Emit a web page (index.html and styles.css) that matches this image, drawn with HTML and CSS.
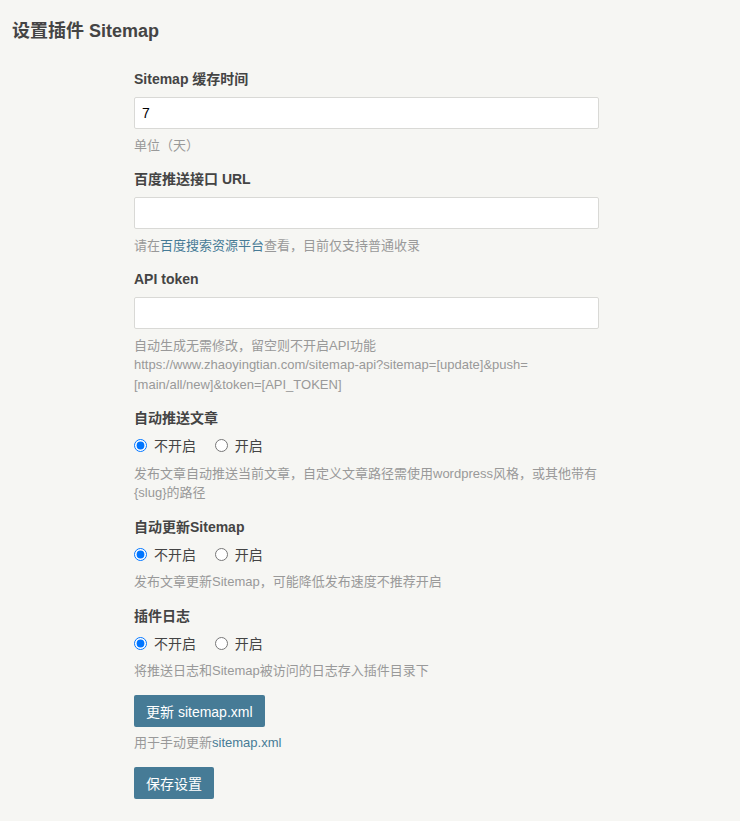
FILE: index.html
```html
<!DOCTYPE html>
<html lang="zh-CN">
<head>
<meta charset="utf-8">
<title>设置插件 Sitemap</title>
<link rel="stylesheet" href="styles.css">
</head>
<body>
<div class="main">
  <div class="page-title"><h2>设置插件 Sitemap</h2></div>
  <form class="config-form">
    <ul class="option">
      <li>
        <label class="option-label">Sitemap 缓存时间</label>
        <input class="text" type="text" value="7">
        <p class="description">单位（天）</p>
      </li>
    </ul>
    <ul class="option">
      <li>
        <label class="option-label">百度推送接口 URL</label>
        <input class="text" type="text" value="">
        <p class="description">请在<a href="#">百度搜索资源平台</a>查看，目前仅支持普通收录</p>
      </li>
    </ul>
    <ul class="option">
      <li>
        <label class="option-label">API token</label>
        <input class="text" type="text" value="">
        <p class="description">自动生成无需修改，留空则不开启API功能<br>https://www.zhaoyingtian.com/sitemap-api?sitemap=[update]&amp;push=[main/all/new]&amp;token=[API_TOKEN]</p>
      </li>
    </ul>
    <ul class="option">
      <li>
        <label class="option-label">自动推送文章</label>
        <span class="choice"><input type="radio" name="push" checked> <label>不开启</label></span>
        <span class="choice"><input type="radio" name="push"> <label>开启</label></span>
        <p class="description">发布文章自动推送当前文章，自定义文章路径需使用wordpress风格，或其他带有{slug}的路径</p>
      </li>
    </ul>
    <ul class="option">
      <li>
        <label class="option-label">自动更新Sitemap</label>
        <span class="choice"><input type="radio" name="upd" checked> <label>不开启</label></span>
        <span class="choice"><input type="radio" name="upd"> <label>开启</label></span>
        <p class="description">发布文章更新Sitemap，可能降低发布速度不推荐开启</p>
      </li>
    </ul>
    <ul class="option">
      <li>
        <label class="option-label">插件日志</label>
        <span class="choice"><input type="radio" name="log" checked> <label>不开启</label></span>
        <span class="choice"><input type="radio" name="log"> <label>开启</label></span>
        <p class="description">将推送日志和Sitemap被访问的日志存入插件目录下</p>
      </li>
    </ul>
    <ul class="option">
      <li>
        <button class="btn primary" type="button">更新 sitemap.xml</button>
        <p class="description">用于手动更新<a href="#">sitemap.xml</a></p>
      </li>
    </ul>
    <ul class="option">
      <li>
        <button class="btn primary" type="submit">保存设置</button>
      </li>
    </ul>
  </form>
</div>
</body>
</html>
```

FILE: styles.css
```css
html, body {
  margin: 0;
  padding: 0;
}
body {
  background: #f6f6f3;
  color: #444;
  font-family: "Liberation Sans", "Noto Sans CJK SC", sans-serif;
  font-size: 14px;
  line-height: 1.5;
}
.main {
  padding: 0 12px;
}
.page-title h2 {
  margin: 18px 0 24px;
  font-size: 18px;
  line-height: 27px;
  font-weight: bold;
}
.config-form {
  margin-left: 122px;
  width: 465px;
}
.option {
  list-style: none;
  margin: 14px 0;
  padding: 0;
}
.option-label {
  display: block;
  margin-bottom: 7px;
  font-weight: bold;
}
.text {
  box-sizing: border-box;
  display: block;
  width: 100%;
  height: 32px;
  padding: 7px;
  border: 1px solid #d9d9d6;
  border-radius: 2px;
  background: #fff;
  color: #000;
  font-family: "Liberation Sans", "Noto Sans CJK SC", sans-serif;
  font-size: 14px;
  outline: none;
}
.choice {
  margin-right: 15px;
}
.choice input {
  margin: 0 3px 0 0;
  width: 13px;
  height: 13px;
  vertical-align: -1px;
}
.description {
  margin: 6.5px 0 0;
  color: #999;
  font-size: 13px;
  line-height: 19.5px;
}
.description a {
  color: #467b96;
  text-decoration: none;
}
.btn {
  height: 32px;
  padding: 0 12px;
  border: none;
  border-radius: 2px;
  font-family: "Liberation Sans", "Noto Sans CJK SC", sans-serif;
  font-size: 14px;
  cursor: pointer;
}
.primary {
  background: #467b96;
  color: #fff;
}
```
